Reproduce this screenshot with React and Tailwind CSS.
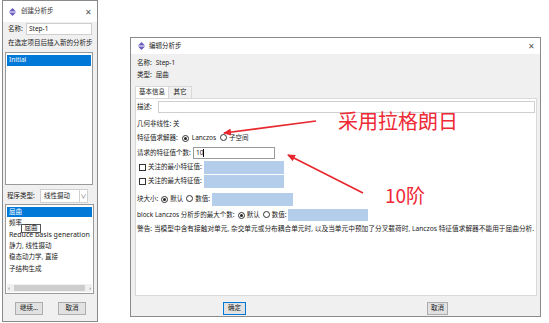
import React from "react";

const F = { fontFamily: '"Noto Sans", "Noto Sans CJK SC", sans-serif' };

function TitleIcon() {
  return (
    <svg width="7" height="8" viewBox="0 0 7 8" className="shrink-0">
      <path d="M3.5 0 L7 3.5 L0 3.5 Z" fill="#6a5fc1" />
      <path d="M3.5 8 L7 4.5 L0 4.5 Z" fill="#6a5fc1" />
    </svg>
  );
}

function Radio({ on }) {
  return (
    <span className="inline-flex w-[7px] h-[7px] rounded-full border border-[#333] bg-white items-center justify-center shrink-0">
      {on ? <span className="w-[3px] h-[3px] rounded-full bg-[#222]" /> : null}
    </span>
  );
}

function Check() {
  return <span className="inline-block w-[7px] h-[7px] border border-[#333] bg-white shrink-0" />;
}

function Btn({ children, focus, w }) {
  return (
    <div
      className={`h-[13px] flex items-center justify-center bg-[#e1e1e1] border ${
        focus ? "border-[#0078d7]" : "border-[#adadad]"
      } ${w}`}
    >
      {children}
    </div>
  );
}

function LeftDialog() {
  return (
    <div className="ml-[2px] w-[96px] h-[322px] border border-[#8a8a8a] bg-[#f0f0f0] flex flex-col">
      <div className="h-[21px] bg-white flex items-center pl-[6px] pr-[5px] shrink-0">
        <TitleIcon />
        <span className="ml-[5px] text-[#333]">创建分析步</span>
        <span className="ml-auto text-[8px] text-[#555]">✕</span>
      </div>
      <div className="flex flex-col px-[2px]">
        <div className="flex items-center h-[12px] mt-[1px] pl-[3px]">
          <span className="w-[18px]">名称:</span>
          <div className="flex-1 mr-[3px] h-[12px] bg-white border border-[#cfcfcf] flex items-center px-[2px]">Step-1</div>
        </div>
        <div className="h-[12px] mt-[2px] flex items-center pl-[3px] whitespace-nowrap">在选定项目后插入新的分析步</div>
        <div className="mt-[3px] w-[88px] h-[133px] bg-white border border-[#9a9a9a] p-[1px]">
          <div className="h-[11px] bg-[#0078d7] text-white flex items-center pl-[2px] mt-[1px]">Initial</div>
        </div>
        <div className="flex items-center mt-[4px] h-[14px] pl-[2px]">
          <span className="w-[33px] whitespace-nowrap">程序类型:</span>
          <div className="w-[48px] h-[14px] bg-white border border-[#cfcfcf] flex items-center pl-[3px]">
            <span>线性摄动</span>
            <span className="ml-auto w-[8px] h-full border-l border-[#cfcfcf] flex items-center justify-center text-[6px] text-[#666]">∨</span>
          </div>
        </div>
        <div className="relative mt-[1px] w-[89px] h-[90px] bg-white border border-[#9a9a9a] p-[1px] flex flex-col">
          <div className="h-[10px] bg-[#0078d7] text-white flex items-center pl-[2px] mt-[1px]">屈曲</div>
          <div className="flex flex-col pl-[2px]">
            <div className="h-[11.5px] flex items-center">频率</div>
            <div className="h-[11.5px] flex items-center whitespace-nowrap text-[7px]">Reduce basis generation</div>
            <div className="h-[11.5px] flex items-center">静力, 线性摄动</div>
            <div className="h-[11.5px] flex items-center">稳态动力学, 直接</div>
            <div className="h-[11.5px] flex items-center">子结构生成</div>
          </div>
          <div className="mt-auto h-[8px] bg-[#f0f0f0] flex items-center text-[6px] text-[#555] px-[1px]">
            <span>‹</span>
            <div className="mx-[4px] flex-1 h-[6px] bg-[#cdcdcd]" />
            <span>›</span>
          </div>
          <div className="absolute left-[15px] top-[19px] w-[20px] h-[9px] bg-white border border-[#555] flex items-center justify-center">屈曲</div>
        </div>
        <div className="flex mt-[8px] pl-[10px]">
          <Btn w="w-[28px]">继续...</Btn>
          <div className="ml-[15px]">
            <Btn w="w-[28px]">取消</Btn>
          </div>
        </div>
      </div>
    </div>
  );
}

function RightDialog() {
  return (
    <div className="ml-[32px] mt-[37px] w-[411px] h-[280px] border border-[#8a8a8a] bg-[#f0f0f0] flex flex-col">
      <div className="h-[16px] bg-white flex items-center pl-[7px] pr-[5px] shrink-0">
        <TitleIcon />
        <span className="ml-[4px]">编辑分析步</span>
        <span className="ml-auto text-[8px] text-[#555]">✕</span>
      </div>
      <div className="flex flex-col pl-[4px] pr-[2px]">
        <div className="h-[12px] mt-[3px] flex items-center pl-[2px]">
          名称:<span className="ml-[4px]">Step-1</span>
        </div>
        <div className="h-[12px] flex items-center pl-[2px]">
          类型:<span className="ml-[4px]">屈曲</span>
        </div>
        <div className="flex mt-[5px] h-[12px]">
          <div className="w-[34px] h-[12px] bg-white border border-b-0 border-[#d9d9d9] flex items-center justify-center">基本信息</div>
          <div className="w-[23px] h-[12px] border border-l-0 border-b-0 border-[#d9d9d9] flex items-center justify-center">其它</div>
        </div>
        <div className="w-[402px] h-[198px] bg-white border border-[#d9d9d9] flex flex-col pl-[1px] pr-[1px]">
          <div className="flex items-center h-[12px] mt-[2px]">
            <span className="w-[21px]">描述:</span>
            <div className="flex-1 h-[12px] border border-[#cfcfcf]" />
          </div>
          <div className="h-[12px] mt-[5px] flex items-center">几何非线性: 关</div>
          <div className="h-[12px] mt-[2px] flex items-center">
            <span>特征值求解器:</span>
            <span className="ml-[4px]"><Radio on /></span>
            <span className="ml-[3px]">Lanczos</span>
            <span className="ml-[4px]"><Radio /></span>
            <span className="ml-[2px]">子空间</span>
          </div>
          <div className="h-[12px] mt-[3px] flex items-center">
            <span className="w-[56px] whitespace-nowrap">请求的特征值个数:</span>
            <div className="w-[82px] h-[12px] border border-[#9a9a9a] flex items-center pl-[2px]">
              10<span className="w-[1px] h-[8px] bg-black" />
            </div>
          </div>
          <div className="h-[13px] mt-[2px] flex items-center">
            <div className="w-[67px] flex items-center pl-[2px]">
              <Check />
              <span className="ml-[2px] whitespace-nowrap">关注的最小特征值:</span>
            </div>
            <div className="w-[80px] h-[13px] bg-[#b3cdeb]" />
          </div>
          <div className="h-[13px] mt-[1px] flex items-center">
            <div className="w-[67px] flex items-center pl-[2px]">
              <Check />
              <span className="ml-[2px] whitespace-nowrap">关注的最大特征值:</span>
            </div>
            <div className="w-[80px] h-[13px] bg-[#b3cdeb]" />
          </div>
          <div className="h-[13px] mt-[5px] flex items-center">
            <span>块大小:</span>
            <span className="ml-[3px]"><Radio on /></span>
            <span className="ml-[2px]">默认</span>
            <span className="ml-[3px]"><Radio /></span>
            <span className="ml-[2px]">数值:</span>
            <div className="ml-[2px] w-[81px] h-[13px] bg-[#b3cdeb]" />
          </div>
          <div className="h-[12px] mt-[3px] flex items-center whitespace-nowrap">
            <span>block Lanczos 分析步的最大个数:</span>
            <span className="ml-[3px]"><Radio on /></span>
            <span className="ml-[2px]">默认</span>
            <span className="ml-[3px]"><Radio /></span>
            <span className="ml-[2px]">数值:</span>
            <div className="ml-[2px] w-[80px] h-[12px] bg-[#b3cdeb]" />
          </div>
          <div className="h-[10px] mt-[3px] flex items-center whitespace-nowrap text-[6.7px]">
            警告: 当模型中含有接触对单元, 杂交单元或分布耦合单元时, 以及当单元中预加了分叉载荷时, Lanczos 特征值求解器不能用于屈曲分析.
          </div>
        </div>
        <div className="flex mt-[6px] pl-[88px]">
          <Btn focus w="w-[23px]">确定</Btn>
          <div className="ml-[181px]">
            <Btn w="w-[21px]">取消</Btn>
          </div>
        </div>
      </div>
    </div>
  );
}

export default function App() {
  return (
    <div className="relative w-[549px] h-[323px] bg-white overflow-hidden text-[6.5px] leading-none text-[#222]" style={F}>
      <div className="flex items-start">
        <LeftDialog />
        <RightDialog />
      </div>
      <svg className="absolute left-0 top-0 pointer-events-none" width="549" height="323">
        <defs>
          <marker id="ah" markerWidth="8" markerHeight="8" refX="7" refY="4" orient="auto" markerUnits="userSpaceOnUse">
            <path d="M0 0.5 L8 4 L0 7.5 Z" fill="#e8262d" />
          </marker>
        </defs>
        <line x1="316" y1="121" x2="224" y2="133" stroke="#e8262d" strokeWidth="1.6" markerEnd="url(#ah)" />
        <line x1="363" y1="193" x2="288" y2="155" stroke="#e8262d" strokeWidth="1.6" markerEnd="url(#ah)" />
      </svg>
      <div className="absolute left-[338px] top-[111px] text-[20px] leading-none text-[#ee2a36] whitespace-nowrap" style={{ fontFamily: '"Noto Sans CJK SC", sans-serif' }}>
        采用拉格朗日
      </div>
      <div className="absolute left-[385px] top-[185px] text-[19px] leading-none text-[#ee2a36] whitespace-nowrap" style={{ fontFamily: '"Noto Sans CJK SC", sans-serif' }}>
        10阶
      </div>
    </div>
  );
}
